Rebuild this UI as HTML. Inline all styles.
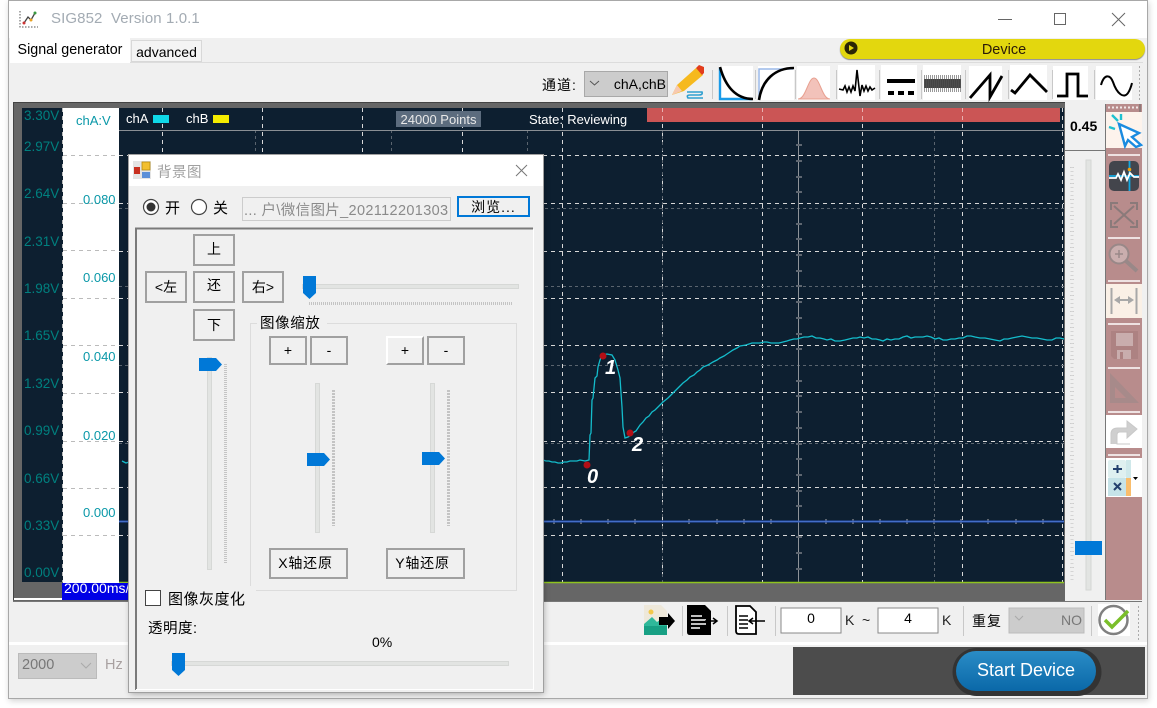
<!DOCTYPE html>
<html><head><meta charset="utf-8"><title>SIG852</title>
<style>
html,body{margin:0;padding:0;width:1157px;height:708px;overflow:hidden;background:#fff}
body{font-family:"Liberation Sans","Noto Sans CJK SC",sans-serif;font-size:14px;color:#000;position:relative}
.a{position:absolute;white-space:nowrap}
svg{position:absolute;left:0;top:0}
.b{position:absolute;box-sizing:border-box;border:2px solid #a0a0a0;background:#f0f0f0;text-align:center;font-size:14px;white-space:nowrap}
.ax{position:absolute;left:24px;color:#00807f;font-size:13.5px;line-height:16px}
.v{position:absolute;left:83px;color:#0a98a8;font-size:13px;line-height:16px}
</style></head><body>
<div class="a" style="left:8px;top:0;width:1140px;height:699px;background:#f0f0f0;border:1px solid #a8a8a8;box-sizing:border-box;box-shadow:1px 2px 6px rgba(0,0,0,.18)"></div>
<div class="a" style="left:9px;top:1px;width:1138px;height:37px;background:#fff"></div>
<div class="a" style="left:51px;top:10px;color:#a3abb3;font-size:15px;letter-spacing:.1px;white-space:pre">SIG852  Version 1.0.1</div>
<div class="a" style="left:13px;top:62px;width:1130px;height:1px;background:#dcdcdc"></div>
<div class="a" style="left:10px;top:38px;width:120px;height:25px;background:#fff;line-height:24px;text-align:center;font-size:14.300px">Signal generator</div>
<div class="a" style="left:131px;top:40px;width:71px;height:22px;background:#f4f4f4;border:1px solid #d8d8d8;box-sizing:border-box;line-height:22px;text-align:center;font-size:14px">advanced</div>
<div class="a" style="left:840px;top:39px;width:305px;height:20px;border-radius:10px;background:#e3d70e;box-shadow:0 1px 1px #888;box-sizing:border-box;padding-left:23px;text-align:center;line-height:22px;font-size:14.500px;color:#2a1a08">Device</div>
<div class="a" style="left:542px;top:75px;font-size:14px;letter-spacing:1px">通道:</div>
<div class="a" style="left:584px;top:71px;width:84px;height:26px;background:#ccc;border:1px solid #a8a8a8;box-sizing:border-box;line-height:25px;text-align:right;padding-right:1px;font-size:14px">chA,chB</div>

<svg width="1157" height="708" viewBox="0 0 1157 708">
<!-- window controls -->
<g stroke="#666" fill="none" stroke-width="1">
<path d="M998 19.500H1012"/><rect x="1054.500" y="13.500" width="11" height="11"/><path d="M1112 13L1125 26M1125 13L1112 26"/>
</g>
<!-- app icon -->
<path d="M20 11V27H38" stroke="#555" stroke-dasharray="1.500 1.500" fill="none"/>
<path d="M24 23L28 17L31 20L35 13" stroke="#444" stroke-width="1.300" fill="none"/>
<circle cx="24" cy="23" r="1.500" fill="#c33"/><circle cx="31" cy="20" r="1.500" fill="#e8a020"/><circle cx="35" cy="13" r="1.500" fill="#3a9a40"/>
<!-- device play -->
<circle cx="851" cy="48" r="6.500" fill="#2b2605"/><path d="M849 45L854 48L849 51Z" fill="#e3d70e"/>
<!-- combo chevrons -->
<path d="M590 81L594.500 85L599 81" fill="none" stroke="#555"/>
<!-- pencil -->
<path d="M672 95L677 85L696 68L703 75L684 91Z" fill="#f6b91e"/><path d="M696 68L699 65L704 67L704 73L702 75Z" fill="#e23c1c"/><path d="M672 95L677 85L682 91Z" fill="#f7c9b0"/>
<path d="M687 92H702Q703 95 699 95H690Q686 95 688 98H703" fill="none" stroke="#2f9fd0" stroke-width="1.600"/>
<!-- toolbar icons -->
<g fill="#fff"><rect x="719" y="66" width="34" height="34"/><rect x="758" y="66" width="36" height="34"/><rect x="797" y="66" width="33" height="34"/><rect x="838" y="65" width="37" height="35"/><rect x="881" y="65" width="36" height="35"/><rect x="923" y="65" width="38" height="35"/><rect x="969" y="66" width="33" height="34"/><rect x="1010" y="65" width="37" height="35"/><rect x="1053" y="66" width="35" height="34"/><rect x="1096" y="66" width="36" height="34"/></g>
<g stroke="#c8c8c8"><path d="M712.500 70V99M755.500 70V99M795.500 70V99M836.500 70V99M879.500 70V99M921.500 70V99M965.500 70V99M1008.500 70V99M1052.500 70V99M1094.500 70V99"/></g>
<path d="M720 68V99H752" fill="none" stroke="#1a9be8" stroke-width="2.400"/>
<path d="M720 67C725 85 735 99 753 99" fill="none" stroke="#000" stroke-width="2.600"/>
<path d="M759 99V69H793" fill="none" stroke="#9ab8e8" stroke-width="1.500"/>
<path d="M759 100C762 80 775 68 794 68" fill="none" stroke="#000" stroke-width="2.600"/>
<path d="M798 99C806 99 808 78 814 78C820 78 822 99 830 99Z" fill="#f2c2ba" stroke="#e8a090"/>
<path d="M839 89L843 90L845 86L847 92L849 87L851 92L853 86L855 91L857 70L860 96L862 85L864 91L866 86L868 91L870 87L872 90L875 88" fill="none" stroke="#000" stroke-width="1.600"/>
<g fill="#000"><rect x="887" y="79" width="28" height="4"/><rect x="888" y="91" width="6" height="4"/><rect x="898" y="91" width="6" height="4"/><rect x="908" y="91" width="6" height="4"/></g>
<rect x="924" y="79" width="37" height="9" fill="#444"/>
<path d="M924 83.500H961" stroke="#555" stroke-width="17" stroke-dasharray="1 1" opacity=".6"/>
<path d="M970 98L990 75V97L1002 76" fill="none" stroke="#000" stroke-width="2.800"/>
<path d="M1011 90L1015 93L1030 75L1047 92" fill="none" stroke="#000" stroke-width="2.800"/>
<path d="M1057 96H1067V74H1078V96H1088" fill="none" stroke="#000" stroke-width="2.800"/>
<path d="M1101 85C1104 74 1110 74 1113 82C1117 94 1124 99 1128 93C1130 90 1131 87 1132 83" fill="none" stroke="#000" stroke-width="2"/>
<path d="M1139.500 66V100" stroke="#aaa" stroke-dasharray="2 2"/>
<!-- plot frame -->
<rect x="13" y="103" width="1052" height="498" fill="#666"/>
<rect x="22" y="108" width="41" height="474" fill="#0d1f30"/>
<rect x="63" y="108" width="56" height="475" fill="#fff"/>
<rect x="119" y="108" width="945" height="475" fill="#0d1f30"/>
<rect x="13" y="598" width="50" height="2" fill="#fff"/>
<path d="M13 102.500H1065M13.500 103V600" stroke="#444"/>
<!-- grid -->
<g stroke="#d8d8d8" stroke-dasharray="4 4" fill="none">
<path d="M162.500 108V582M262.500 108V582M362.500 108V582M462.500 108V582M562.500 108V582M662.500 108V582M762.500 108V582M862.500 108V582M962.500 108V582M1062.500 108V582"/>
<path d="M119 155.500H1064M119 203.500H1064M119 251.500H1064M119 298.500H1064M119 345.500H1064M119 392.500H1064M119 441.500H1064M119 487.500H1064M119 535.500H1064"/>
</g>
<g stroke="#bbb" stroke-dasharray="4 4" fill="none"><path d="M63 155.500H119M63 203.500H119M63 250.500H119M63 298.500H119M63 345.500H119M63 393.500H119M63 441.500H119M63 488.500H119M63 535.500H119M62.500 108V582"/></g>
<g stroke="#5a646e" stroke-dasharray="3 3" fill="none"><path d="M119 208.500H1064M119 286.500H1064M119 365.500H1064M119 443.500H1064M255.500 130V582M391.500 130V582M527.500 130V582M662.500 130V582M934.500 130V582"/></g>
<path d="M119 130.500H1064" stroke="#8a8f94"/>
<path d="M798.500 130V582" stroke="#8d9399"/>
<g stroke="#5e6670" stroke-width="2"><path d="M796 318H802M796 334H802M796 349H802M796 381H802M796 396H802M796 412H802M796 428H802M796 444H802M796 459H802M796 475H802M796 491H802M796 506H802M796 537H802M796 553H802M796 569H802M796 302H802M796 286H802M796 271H802M796 255H802M796 239H802M796 224H802M796 192H802M796 177H802M796 161H802M796 145H802"/></g>
<g stroke="#5e6670" stroke-width="2"><path d="M554 519V524M581 519V524M608 519V524M635 519V524M689 519V524M717 519V524M744 519V524M771 519V524M826 519V524M853 519V524M880 519V524M907 519V524M934 519V524M961 519V524M988 519V524M1016 519V524M1043 519V524"/></g>
<!-- traces -->
<path d="M119 521.500H1064" stroke="#2a56b8" stroke-width="2"/>
<path d="M119 521.500H1064" stroke="#5f86d8" stroke-width=".6"/>
<path d="M119 582.500H1064" stroke="#8fc31f" stroke-width="1.500"/>
<polyline fill="none" stroke="#14bccb" stroke-width="1.300" points="122,461 126,463 129,462 543,460 546,461 549,461 552,462 555,462 558,463 561,463 564,462 567,462 570,461 573,461 577,461 580,460 585,461 589,460 590,435 591,433 592,400 593,398 595,378 597,376 598,367 600,360 602,355 607,354 612,355 615,360 618,370 620,378 621,393 622,407 623,427 625,438 628,437 631,435 634,432 636,431 640,425 643,422 646,418 649,416 652,412 655,410 658,407 661,404 663,402 668,398 672,394 675,391 679,387 683,383 687,380 690,377 694,375 697,372 700,370 703,367 708,365 713,362 717,360 720,358 724,356 727,354 730,352 733,350 737,348 740,346 746,345 752,343 756,343 760,343 764,342 767,342 771,343 775,343 779,343 783,342 787,341 790,340 794,339 797,339 800,338 804,337 808,337 812,336 816,338 820,338 824,339 827,340 831,339 835,341 840,341 845,340 849,339 853,338 857,338 860,337 864,338 868,337 872,339 876,339 880,340 883,341 887,339 891,340 895,339 899,339 903,337 907,336 911,338 915,337 919,337 923,337 927,336 931,337 935,339 939,338 943,340 947,340 951,339 955,339 959,338 963,338 967,336 971,336 975,337 980,338 985,338 990,339 995,340 1000,341 1004,339 1008,339 1012,338 1017,337 1022,336 1027,337 1032,338 1037,338 1042,339 1047,340 1052,340 1056,338 1060,338 1064,339"/>
<g fill="#b30f16"><circle cx="587" cy="465" r="3.500"/><circle cx="603" cy="356" r="3.500"/><circle cx="630" cy="433" r="3.500"/></g>
<!-- channel swatches -->
<rect x="153" y="115" width="16" height="8" fill="#0fd8e8"/><rect x="213" y="115" width="16" height="8" fill="#f5ec00"/>
<rect x="396" y="111" width="85" height="16" fill="#5c6c7e"/>
<rect x="647" y="108" width="413" height="14" fill="#cb5555"/>
<path d="M662.500 108V122M762.500 108V122M862.500 108V122M962.500 108V122" stroke="#e8b0b0" stroke-dasharray="4 4"/>
<!-- right column -->
<rect x="1065" y="104" width="41" height="496" fill="#f0f0f0"/>
<path d="M1065 150.500H1106" stroke="#777"/><path d="M1105.500 104V600" stroke="#777"/>
<rect x="1086" y="160" width="5" height="430" fill="#e2e4e2" stroke="#d4d6d4"/>
<path d="M1072 167V583" stroke="#c6c6c6" stroke-width="4" stroke-dasharray="1 15"/>
<path d="M1072 167V583" stroke="#d4d4d4" stroke-width="3" stroke-dasharray="1 3"/>
<rect x="1075" y="541" width="27" height="14" fill="#0078d7"/>
<!-- right toolbar -->
<rect x="1106" y="104" width="36" height="496" fill="#b88c8c"/>
<path d="M1108 107.500H1140" stroke="#fff" stroke-width="2" stroke-dasharray="2 2" opacity=".8"/>
<rect x="1106" y="112" width="36" height="36" fill="#fdf3ec"/>
<path d="M1119 124L1139 133L1132 137L1141 145L1136 147L1128 140L1125 146Z" fill="#fff" stroke="#1a8be0" stroke-width="2.400"/>
<path d="M1109 127L1115 129M1112 115L1118 121M1121 114L1121 120" stroke="#20c0d0" stroke-width="2.400"/>
<g stroke="#fff" stroke-width="1.500"><path d="M1108 155H1140M1108 238H1140M1108 281H1140M1108 324H1140M1108 368H1140M1108 412H1140M1108 455H1140"/></g>
<rect x="1109" y="161" width="30" height="30" rx="5" fill="#43454c"/>
<path d="M1109 176H1139M1129.500 161V191" stroke="#12a8e0" stroke-width="1.800"/>
<path d="M1109 178L1116 178L1118 174L1121 180L1124 172L1127 180L1130 173L1134 177L1139 177" fill="none" stroke="#fff" stroke-width="1.800"/>
<circle cx="1129.500" cy="169.500" r="1.800" fill="#f0a010"/>
<g fill="none" stroke="#8a7a7a" stroke-width="2"><path d="M1111 210V203H1118M1130 203H1137V210M1137 220V227H1130M1118 227H1111V220M1114 206L1134 224M1134 206L1114 224"/></g>
<circle cx="1119" cy="254" r="9.500" fill="#caaeae" stroke="#988" stroke-width="2"/>
<path d="M1115 254H1123M1119 250V258" stroke="#988" stroke-width="1.500"/>
<path d="M1126 261L1137 271" stroke="#988" stroke-width="4"/>
<rect x="1106" y="284" width="36" height="34" fill="#faf0e6"/>
<path d="M1111.500 288V314M1136.500 288V314" stroke="#a8a8a8" stroke-width="2"/>
<path d="M1114 300L1120 296V299H1128V296L1134 300L1128 304V301H1120V304Z" fill="#a8a8a8"/>
<path d="M1111 331H1138V359H1114L1111 356Z" fill="#ad8282"/>
<rect x="1116" y="333" width="17" height="13" fill="#c9adad"/><rect x="1117" y="350" width="14" height="9" fill="#c9adad"/><rect x="1120" y="352" width="3" height="7" fill="#ad8282"/>
<path d="M1110 373V403H1139Z" fill="#a78a8a"/><path d="M1115 387V398H1126Z" fill="#b88c8c"/>
<rect x="1106" y="415" width="36" height="33" fill="#fff"/>
<path d="M1111 444V434Q1111 428 1118 428H1127V421L1137 429L1127 438V432H1120Q1117 432 1117 435V444H1130" fill="#cfcfcf" stroke="#c8c8c8"/>
<rect x="1106" y="458" width="36" height="39" fill="#fff"/>
<rect x="1108" y="460" width="18" height="18" rx="2" fill="#dff0f0"/><rect x="1108" y="478" width="18" height="18" fill="#c6e3e8"/>
<rect x="1126" y="460" width="5" height="18" fill="#cfe8ea"/><rect x="1126" y="478" width="5" height="18" fill="#f9bd6c"/>
<path d="M1113 469H1122M1117.500 465V473M1114 483L1121 490M1121 483L1114 490" stroke="#23406e" stroke-width="2"/>
<path d="M1133 477H1138L1135.500 480Z" fill="#000"/>
<path d="M1140 104V112" stroke="#666"/>
<!-- bottom bar -->
<path d="M13 601.500H1142" stroke="#777"/>
<path d="M9 643.500H1147" stroke="#fff" stroke-width="3"/>
<!-- jpg icon -->
<path d="M644 605H661L667 611V635H644Z" fill="#eee8da"/><circle cx="651" cy="612" r="2.500" fill="#f2c84b"/>
<path d="M644 624L652 617L657 622L663 618L667 622V626H644Z" fill="#2fb89a"/><rect x="644" y="626" width="23" height="9" fill="#18a084"/>
<path d="M659 617H668V613L675 621L668 629V625H659Z" fill="#000"/>
<!-- doc icons -->
<path d="M687 605H705L711 611V635H690Q687 635 687 632Z" fill="#000"/>
<path d="M691 616H702M691 620H706M691 624H706M691 628H700" stroke="#fff" stroke-width="1.500"/>
<path d="M705 621H716M713 618L717 621L713 624" fill="none" stroke="#000" stroke-width="1.500"/>
<path d="M736 606H750L756 612V634H739Q736 634 736 631Z" fill="#fff" stroke="#000" stroke-width="1.800"/>
<path d="M739 616H748M739 620H748M739 624H748M739 628H748" stroke="#000" stroke-width="1.500"/>
<path d="M750 621H765M753 618L749 621L753 624" fill="none" stroke="#000" stroke-width="1.500"/>
<g stroke="#c8c8c8"><path d="M682.500 606V636M727.500 606V636M775.500 606V636M963.500 606V636M1091.500 606V636"/></g>
<rect x="781" y="608" width="60" height="25" fill="#fff" stroke="#888"/><rect x="878" y="608" width="60" height="25" fill="#fff" stroke="#888"/>
<rect x="1009" y="608" width="75" height="25" fill="#ccc" stroke="#bbb"/>
<path d="M1015 616L1019 620L1023 616" fill="none" stroke="#aaa"/>
<rect x="1098" y="604" width="32" height="32" fill="#fff"/>
<circle cx="1113.500" cy="620" r="14" fill="none" stroke="#808080" stroke-width="2.500"/>
<path d="M1105 620L1112 627L1128 611" fill="none" stroke="#7abf2a" stroke-width="3.500"/>
<path d="M1138.500 606V640" stroke="#aaa" stroke-dasharray="2 2"/>
<!-- start device panel -->
<rect x="793" y="647" width="352" height="48" fill="#4c4c4c"/>
<rect x="952.500" y="648" width="149" height="48" rx="24" fill="#333"/>
<defs><linearGradient id="g" x1="0" y1="0" x2="0" y2="1"><stop offset="0" stop-color="#2a8cc6"/><stop offset="1" stop-color="#0a68a8"/></linearGradient></defs>
<rect x="956" y="651" width="140" height="40" rx="20" fill="url(#g)"/>
<!-- lower left -->
<rect x="18.500" y="653.500" width="78" height="25" fill="#ccc" stroke="#bbb"/>
<path d="M81 663L86 668L91 663" fill="none" stroke="#aaa"/>
</svg>

<div class="ax" style="top:108px">3.30V</div><div class="ax" style="top:139px">2.97V</div><div class="ax" style="top:186px">2.64V</div><div class="ax" style="top:234px">2.31V</div><div class="ax" style="top:281px">1.98V</div><div class="ax" style="top:328px">1.65V</div><div class="ax" style="top:376px">1.32V</div><div class="ax" style="top:423px">0.99V</div><div class="ax" style="top:471px">0.66V</div><div class="ax" style="top:518px">0.33V</div><div class="ax" style="top:565px">0.00V</div>
<div class="a" style="left:76px;top:113px;color:#0a98a8;font-size:13px">chA:V</div>
<div class="v" style="top:192px">0.080</div><div class="v" style="top:270px">0.060</div><div class="v" style="top:349px">0.040</div><div class="v" style="top:428px">0.020</div><div class="v" style="top:505px">0.000</div>
<div class="a" style="left:126px;top:111px;color:#fff;font-size:13px">chA</div>
<div class="a" style="left:186px;top:111px;color:#fff;font-size:13px">chB</div>
<div class="a" style="left:396px;top:112px;width:85px;text-align:center;color:#e8e8e8;font-size:13px">24000 Points</div>
<div class="a" style="left:529px;top:112px;color:#fff;font-size:13px;white-space:pre;word-spacing:-1.500px">State:  Reviewing</div>
<div class="a" style="left:1070px;top:118px;font-weight:bold;font-size:14px">0.45</div>
<div class="a" style="left:587px;top:466px;color:#fff;font-weight:bold;font-style:italic;font-size:20px">0</div>
<div class="a" style="left:605px;top:357px;color:#fff;font-weight:bold;font-style:italic;font-size:20px">1</div>
<div class="a" style="left:632px;top:434px;color:#fff;font-weight:bold;font-style:italic;font-size:20px">2</div>
<div class="a" style="left:62px;top:583px;width:67px;height:17px;background:#0000e6;color:#fff;font-size:14px;line-height:11px;overflow:hidden;padding-left:2px;box-sizing:border-box">200.00ms/Div</div>
<div class="a" style="left:781px;top:610px;width:60px;text-align:center;font-size:14px">0</div>
<div class="a" style="left:878px;top:610px;width:60px;text-align:center;font-size:14px">4</div>
<div class="a" style="left:845px;top:612px;font-size:14px;color:#222">K</div>
<div class="a" style="left:862px;top:612px;font-size:14px;color:#222">~</div>
<div class="a" style="left:942px;top:612px;font-size:14px;color:#222">K</div>
<div class="a" style="left:972px;top:611px;font-size:14px;letter-spacing:1px">重复</div>
<div class="a" style="left:1009px;top:612px;width:73px;text-align:right;font-size:14px;color:#777">NO</div>
<div class="a" style="left:956px;top:660px;width:140px;text-align:center;color:#fff;font-size:18px">Start Device</div>
<div class="a" style="left:22px;top:657px;color:#777;font-size:14.500px">2000</div>
<div class="a" style="left:105px;top:657px;color:#a8a0a0;font-size:14.500px">Hz</div>

<!-- dialog -->
<div class="a" style="left:129px;top:155px;width:414px;height:537px;background:#f0f0f0;box-shadow:0 0 0 1px #a0a0a0,1px 2px 6px rgba(0,0,0,.3)">
 <div class="a" style="left:0;top:0;width:414px;height:31px;background:#fff"></div>
 <svg width="414" height="537" viewBox="129 155 414 537">
  <rect x="133" y="161" width="18" height="18" fill="#e4e4e4"/><rect x="142" y="162" width="8" height="8" fill="#f2bf2e" stroke="#b58a10" stroke-width=".8"/><rect x="134" y="167" width="6" height="7" fill="#c83020"/><rect x="142" y="172" width="8" height="6" fill="#5b8fd8"/>
  <path d="M516 165L527 176M527 165L516 176" stroke="#777"/>
  <circle cx="151" cy="207" r="7.500" fill="#fff" stroke="#444" stroke-width="1.200"/><circle cx="151" cy="207" r="4.500" fill="#333"/>
  <circle cx="199" cy="207" r="7.500" fill="#fff" stroke="#444" stroke-width="1.200"/>
  <rect x="242.500" y="197.500" width="208" height="23" fill="#f0f0f0" stroke="#ccc"/>
  <rect x="458" y="197" width="71" height="19" fill="#f0f0f0" stroke="#0078d7" stroke-width="2"/>
  <path d="M136 690V228.500H533" fill="none" stroke="#7a7a7a" stroke-width="2"/>
  <path d="M533.500 229V689.500H136" fill="none" stroke="#fff"/>
  <rect x="250.500" y="323.500" width="266" height="267" fill="none" stroke="#dcdcdc"/>
  <rect x="257" y="318" width="70" height="10" fill="#f0f0f0"/>
  <rect x="144" y="586" width="112" height="24" fill="#f0f0f0"/>
  <!-- sliders -->
  <rect x="302.500" y="284.500" width="216" height="4" fill="#e2e4e2" stroke="#d6d8d6"/>
  <path d="M309 303.500H512" stroke="#c4c4c4" stroke-width="3" stroke-dasharray="1 1"/>
  <path d="M303 276H316V293L309.500 299L303 293Z" fill="#0078d7"/>
  <rect x="207.500" y="357.500" width="4" height="212" fill="#e2e4e2" stroke="#d6d8d6"/>
  <path d="M225.500 364V563" stroke="#c4c4c4" stroke-width="3" stroke-dasharray="1 1"/>
  <path d="M199 358H216L222 364.500L216 371H199Z" fill="#0078d7"/>
  <rect x="315.500" y="383.500" width="4" height="149" fill="#e2e4e2" stroke="#d6d8d6"/>
  <path d="M333.500 390V526" stroke="#c4c4c4" stroke-width="3" stroke-dasharray="2 1"/>
  <path d="M307 453H324L330 459.500L324 466H307Z" fill="#0078d7"/>
  <rect x="430.500" y="383.500" width="4" height="149" fill="#e2e4e2" stroke="#d6d8d6"/>
  <path d="M448.500 390V526" stroke="#c4c4c4" stroke-width="3" stroke-dasharray="2 1"/>
  <path d="M422 452H439L445 458.500L439 465H422Z" fill="#0078d7"/>
  <rect x="145.500" y="590.500" width="15" height="15" fill="#fff" stroke="#444"/>
  <rect x="171.500" y="661.500" width="337" height="4" fill="#e2e4e2" stroke="#d6d8d6"/>
  <path d="M172 653H185V670L178.500 676L172 670Z" fill="#0078d7"/>
 </svg>
 <div class="a" style="left:28px;top:6px;color:#a0a0a0;font-size:14.500px;letter-spacing:.5px">背景图</div>
 <div class="a" style="left:36px;top:42px;font-size:15px">开</div>
 <div class="a" style="left:84px;top:42px;font-size:15px">关</div>
 <div class="a" style="left:115px;top:44px;width:206px;overflow:hidden;color:#8a8a8a;font-size:14.500px;letter-spacing:.35px">... 户\微信图片_202112201303</div>
 <div class="a" style="left:328px;top:42px;width:73px;text-align:center;font-size:14px;letter-spacing:1px">浏览...</div>
 <div class="a" style="left:131px;top:157px;font-size:14.500px;letter-spacing:.6px">图像缩放</div>
 <div class="b" style="left:64px;top:79px;width:42px;height:32px;line-height:26px">上</div>
 <div class="b" style="left:16px;top:116px;width:42px;height:32px;line-height:28px">&lt;左</div>
 <div class="b" style="left:64px;top:116px;width:42px;height:32px;line-height:25px">还</div>
 <div class="b" style="left:113px;top:116px;width:42px;height:32px;line-height:28px">右&gt;</div>
 <div class="b" style="left:64px;top:154px;width:42px;height:32px;line-height:28px">下</div>
 <div class="b" style="left:140px;top:181px;width:38px;height:29px;line-height:25px">+</div>
 <div class="b" style="left:181px;top:181px;width:38px;height:29px;line-height:25px">-</div>
 <div class="b" style="left:257px;top:181px;width:38px;height:29px;line-height:25px;border-color:#fff #a0a0a0 #a0a0a0 #fff">+</div>
 <div class="b" style="left:298px;top:181px;width:38px;height:29px;line-height:25px">-</div>
 <div class="b" style="left:140px;top:393px;width:79px;height:31px;line-height:27px;letter-spacing:.8px;padding-right:6px">X轴还原</div>
 <div class="b" style="left:257px;top:393px;width:79px;height:31px;line-height:27px;letter-spacing:.8px;padding-right:6px">Y轴还原</div>
 <div class="a" style="left:39px;top:433px;font-size:15px;letter-spacing:.5px">图像灰度化</div>
 <div class="a" style="left:19px;top:462px;font-size:14.500px;letter-spacing:.5px">透明度:</div>
 <div class="a" style="left:243px;top:479px;font-size:14px">0%</div>
</div>
</body></html>
